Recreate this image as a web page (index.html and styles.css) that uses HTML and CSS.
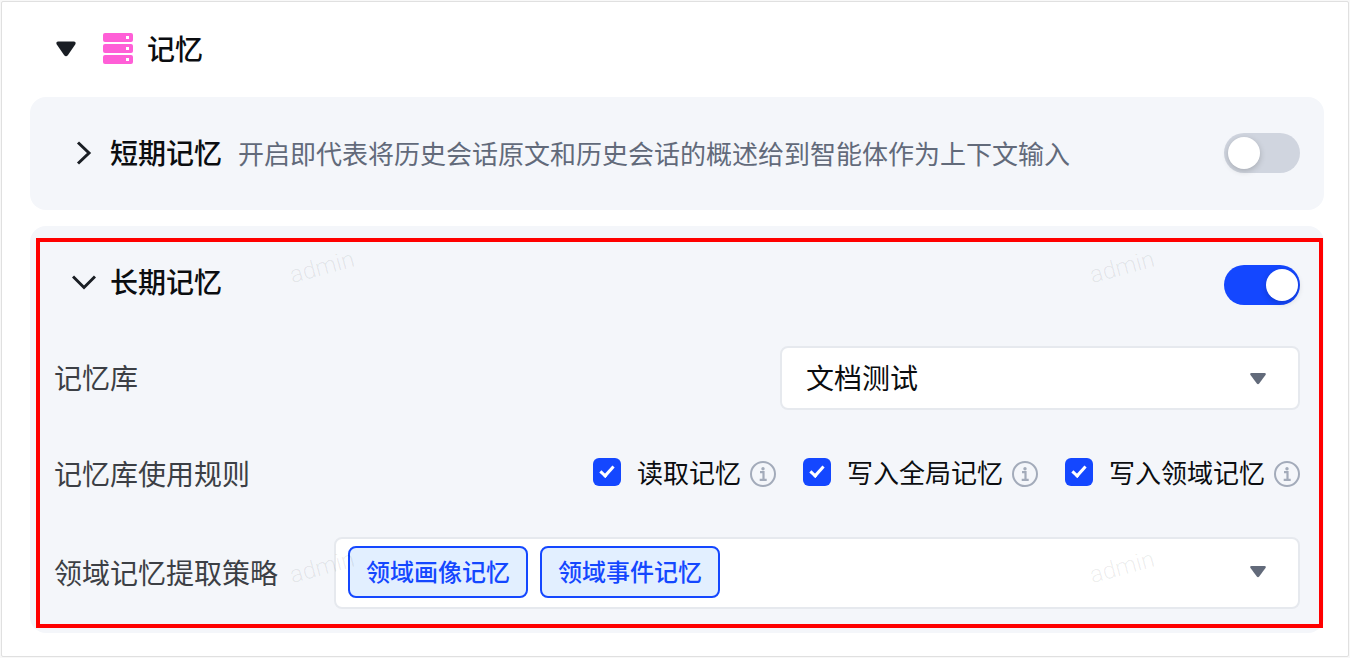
FILE: index.html
```html
<!DOCTYPE html>
<html lang="zh-CN">
<head>
    <meta charset="UTF-8">
    <meta name="viewport" content="width=device-width, initial-scale=1.0">
    <title>记忆</title>
    <link rel="stylesheet" href="styles.css">
</head>
<body>
    <main class="panel">
        <header class="panel-header">
            <button type="button" class="icon-button" aria-label="收起" aria-expanded="true">
                <svg width="20" height="16" viewBox="0 0 20 16"><path d="M2 .5h16q2.500 .5 1.200 3L12 14q-2 2.400-4 0L.8 3.500Q-.5 1 2 .5z" fill="#1a1e24"/></svg>
            </button>
            <svg class="memory-icon" width="30" height="31" viewBox="0 0 30 31">
                <g fill="#ff5fd7">
                    <rect y="0" width="30" height="9" rx="2"/>
                    <rect y="11" width="30" height="9" rx="2"/>
                    <rect y="22" width="30" height="9" rx="2"/>
                </g>
                <g fill="#fff">
                    <rect x="23" y="3" width="3" height="3"/>
                    <rect x="23" y="14" width="3" height="3"/>
                    <rect x="23" y="25" width="3" height="3"/>
                </g>
            </svg>
            <h1 class="title">记忆</h1>
        </header>

        <section class="card card-short">
            <button type="button" class="icon-button" aria-label="展开" aria-expanded="false">
                <svg width="24" height="24" viewBox="0 0 24 24"><path d="M6 1.500 17 12 6 22.500" fill="none" stroke="#1a1e24" stroke-width="3"/></svg>
            </button>
            <h2 class="title">短期记忆</h2>
            <p class="description">开启即代表将历史会话原文和历史会话的概述给到智能体作为上下文输入</p>
            <input type="checkbox" class="switch" role="switch" aria-label="短期记忆">
        </section>

        <section class="card card-long">
            <div class="card-header">
                <button type="button" class="icon-button" aria-label="收起" aria-expanded="true">
                    <svg width="24" height="24" viewBox="0 0 24 24"><path d="M1 6.500 12 17.500 23 6.500" fill="none" stroke="#1a1e24" stroke-width="3"/></svg>
                </button>
                <h2 class="title">长期记忆</h2>
                <input type="checkbox" class="switch" role="switch" aria-label="长期记忆" checked>
            </div>

            <div class="row">
                <label class="row-label" for="library">记忆库</label>
                <div class="select-box">
                    <select id="library">
                        <option>文档测试</option>
                    </select>
                    <svg class="arrow" width="16" height="12" viewBox="0 0 16 12"><path d="M1.500 0h13q2 .2 1 2L9.200 10.500q-1.200 1.500-2.400 0L.5 2q-1-1.800 1-2z" fill="#626a7a"/></svg>
                </div>
            </div>

            <div class="row row-rules">
                <span class="row-label">记忆库使用规则</span>
                <div class="rules">
                    <div class="rule">
                        <input type="checkbox" class="check" id="read" checked>
                        <label for="read">读取记忆</label>
                        <svg class="info" width="26" height="26" viewBox="0 0 26 26"><use href="#info"/></svg>
                    </div>
                    <div class="rule">
                        <input type="checkbox" class="check" id="write-global" checked>
                        <label for="write-global">写入全局记忆</label>
                        <svg class="info" width="26" height="26" viewBox="0 0 26 26"><use href="#info"/></svg>
                    </div>
                    <div class="rule">
                        <input type="checkbox" class="check" id="write-domain" checked>
                        <label for="write-domain">写入领域记忆</label>
                        <svg class="info" width="26" height="26" viewBox="0 0 26 26"><use href="#info"/></svg>
                    </div>
                </div>
            </div>

            <div class="row row-strategy">
                <label class="row-label" for="strategy">领域记忆提取策略</label>
                <button type="button" class="multi-select" id="strategy" aria-haspopup="listbox">
                    <span class="tag">领域画像记忆</span>
                    <span class="tag">领域事件记忆</span>
                    <svg class="arrow" width="16" height="12" viewBox="0 0 16 12"><path d="M1.500 0h13q2 .2 1 2L9.200 10.500q-1.200 1.500-2.400 0L.5 2q-1-1.800 1-2z" fill="#626a7a"/></svg>
                </button>
            </div>

            <div class="watermarks" aria-hidden="true">
                <span>admin</span>
                <span>admin</span>
                <span>admin</span>
                <span>admin</span>
            </div>
            <div class="highlight"></div>
        </section>
    </main>

    <svg class="symbols" width="0" height="0" aria-hidden="true">
        <symbol id="info" viewBox="0 0 26 26">
            <circle cx="13" cy="13" r="12" fill="none" stroke="#a3abba" stroke-width="2"/>
            <circle cx="13" cy="7.700" r="1.700" fill="#a3abba"/>
            <path d="M10 11.200h3.500v7.500M9.700 18.800h7" fill="none" stroke="#a3abba" stroke-width="2.200"/>
        </symbol>
    </svg>
</body>
</html>
```
FILE: styles.css
```css
* {
    box-sizing: border-box;
}

body {
    margin: 0;
    padding: 1px;
    background-color: #f8f8f8;
    color: #0b0d10;
    font-family: "Noto Sans CJK SC", sans-serif;
}

.panel {
    padding: 0 24px 23px 28px;
    background: white;
    border: 1px solid #e0e0e0;
    border-radius: 2px;
}

.panel-header {
    display: flex;
    align-items: center;
    height: 95px;
    padding: 0 0 2px 24px;
}

.memory-icon {
    margin-left: 25px;
}

.icon-button {
    display: flex;
    align-items: center;
    justify-content: center;
    width: 24px;
    height: 34px;
    padding: 0;
    border: none;
    background: none;
    cursor: pointer;
}

.title {
    margin: 0 0 0 14px;
    padding-bottom: 2px;
    font-size: 28px;
    line-height: 32px;
    font-weight: 500;
}

.card {
    background: #f4f6fa;
    border-radius: 16px;
}

.card-short {
    display: flex;
    align-items: center;
    height: 113px;
    padding: 0 24px 2px 42px;
}

.description {
    margin: 0 0 0 16px;
    color: #626a7a;
    font-size: 26px;
    line-height: 36px;
}

.card-long {
    position: relative;
    display: flex;
    flex-direction: column;
    gap: 24px;
    margin-top: 16px;
    padding: 24px;
}

.card-header {
    display: flex;
    align-items: flex-start;
    height: 72px;
    padding: 15px 0 0 18px;
}

.switch {
    appearance: none;
    flex: none;
    width: 76px;
    height: 40px;
    margin: 0 0 0 auto;
    padding: 4px;
    border-radius: 20px;
    background: #d0d5df;
    cursor: pointer;
}

.switch::before {
    content: "";
    display: block;
    width: 32px;
    height: 32px;
    border-radius: 50%;
    background: white;
    box-shadow: 0 2px 6px rgba(0, 0, 0, 0.2);
}

.switch:checked {
    padding-right: 2px;
    background: #1447ff;
}

.switch:checked::before {
    margin-left: auto;
}

.row {
    display: flex;
    align-items: center;
    justify-content: space-between;
}

.row-label {
    flex: none;
    padding-bottom: 2px;
    color: #3c3f45;
    font-size: 28px;
    line-height: 40px;
}

.select-box {
    position: relative;
    width: 42%;
    max-width: 520px;
}

.select-box select {
    appearance: none;
    display: block;
    width: 100%;
    height: 64px;
    padding: 0 24px 2px;
    border: 2px solid #e6e9ee;
    border-radius: 8px;
    background: white;
    color: inherit;
    font-family: inherit;
    font-size: 28px;
}

.select-box .arrow {
    position: absolute;
    top: 27px;
    right: 34px;
    pointer-events: none;
}

.row-rules {
    height: 79px;
}

.rules {
    display: flex;
    gap: 27px;
}

.rule {
    display: flex;
    align-items: center;
    font-size: 26px;
    line-height: 36px;
}

.rule label {
    margin: 0 9px 0 16px;
    padding-bottom: 4px;
}

.check {
    appearance: none;
    width: 28px;
    height: 28px;
    margin: 0 0 4px;
    border-radius: 6px;
    background: #1447ff;
}

.check::before {
    content: "";
    display: block;
    width: 5px;
    height: 11px;
    margin: 5px 0 0 10px;
    border: solid white;
    border-width: 0 3px 3px 0;
    transform: rotate(42deg);
}

.multi-select {
    display: flex;
    flex: 1;
    align-items: center;
    gap: 12px;
    height: 72px;
    margin-left: 56px;
    padding: 0 32px 2px 12px;
    border: 2px solid #e6e9ee;
    border-radius: 8px;
    background: white;
    font-family: inherit;
}

.multi-select .arrow {
    margin-left: auto;
}

.tag {
    height: 52px;
    padding: 0 16px;
    border: 2px solid #1447ff;
    border-radius: 8px;
    background: #e2efff;
    color: #1447ff;
    font-size: 24px;
    line-height: 46px;
    font-weight: 500;
}

/* repeated user name laid over the card */
.watermarks {
    position: absolute;
    top: 21px;
    left: 259px;
    display: grid;
    grid-template-columns: 800px 64px;
    row-gap: 260px;
    color: rgba(0, 0, 0, 0.08);
    font-family: Roboto, sans-serif;
    font-size: 24px;
    line-height: 40px;
    font-weight: 300;
    pointer-events: none;
}

.watermarks span {
    justify-self: start;
    transform: rotate(-15deg);
}

.highlight {
    position: absolute;
    top: 12px;
    right: 1px;
    bottom: 5px;
    left: 6px;
    border: 4px solid #ff0000;
    pointer-events: none;
}

.symbols {
    position: absolute;
}
```
